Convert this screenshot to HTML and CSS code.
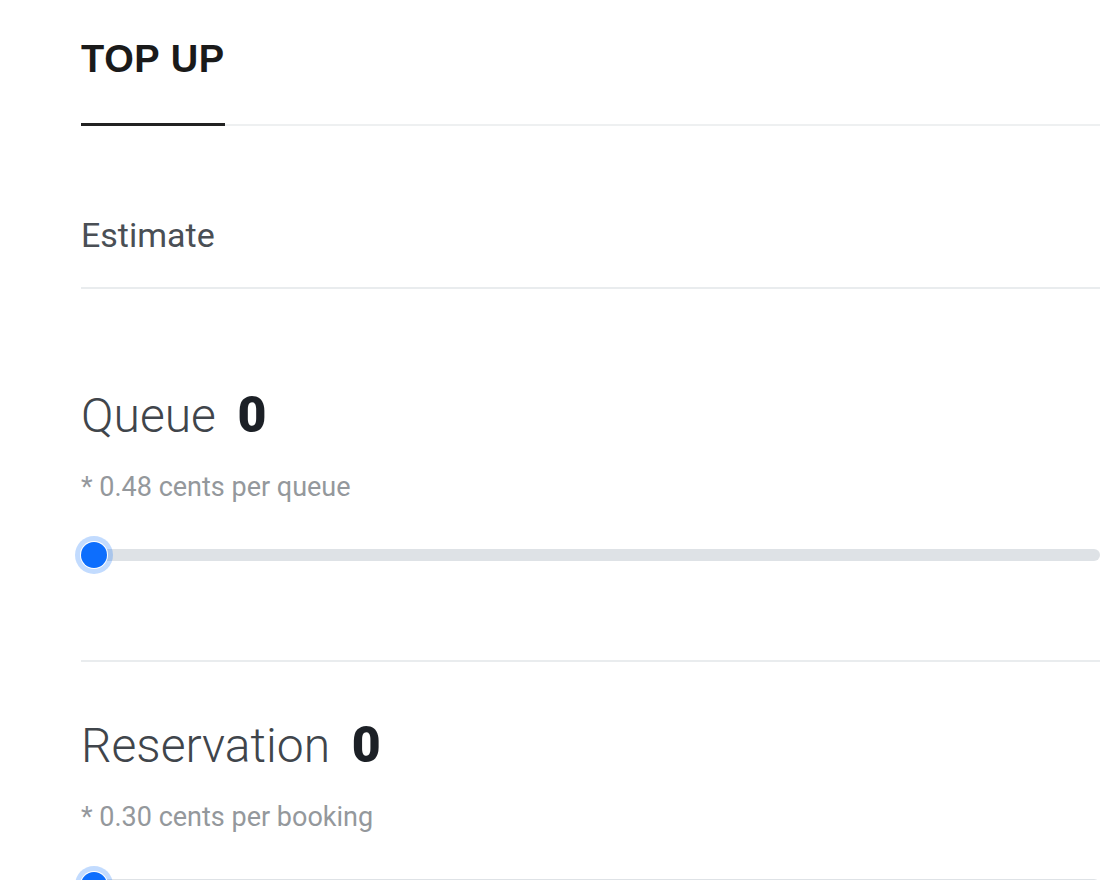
FILE: index.html
```html
<!DOCTYPE html>
<html lang="en">

<head>
    <meta charset="UTF-8">
    <meta name="viewport" content="width=device-width, initial-scale=1.0">
    <title>Top Up</title>
    <link rel="stylesheet" href="styles.css">
</head>

<body>
    <div class="page">
        <!-- Tabs -->
        <div class="tabs">
            <div class="tab active">TOP UP</div>
        </div>

        <div class="estimate">Estimate</div>

        <!-- Queue -->
        <div class="item first">
            <div class="item-title">Queue <span class="count">0</span></div>
            <div class="item-note">* 0.48 cents per queue</div>
            <div class="range">
                <div class="range-track"></div>
                <div class="range-thumb"></div>
            </div>
        </div>

        <!-- Reservation -->
        <div class="item">
            <div class="item-title">Reservation <span class="count">0</span></div>
            <div class="item-note">* 0.30 cents per booking</div>
            <div class="range">
                <div class="range-track"></div>
                <div class="range-thumb"></div>
            </div>
        </div>
    </div>
</body>

</html>
```

FILE: styles.css
```css
body {
    font-family: Roboto, "Liberation Sans", sans-serif;
    margin: 0;
    padding: 0;
    background-color: #ffffff;
    color: #212529;
    overflow: hidden;
}

.page {
    padding-left: 81px;
}

.tabs {
    display: flex;
    padding-top: 40px;
    border-bottom: 2px solid #eef0f1;
}

.tab {
    font-family: "Liberation Sans", Arial, sans-serif;
    font-weight: bold;
    font-size: 38px;
    line-height: 38px;
    letter-spacing: 0.6px;
    color: #1a1a1a;
    padding-bottom: 45px;
    margin-bottom: -2px;
    border-bottom: 3px solid transparent;
}

.tab.active {
    border-bottom-color: #222;
}

.estimate {
    margin-top: 92px;
    font-size: 34px;
    line-height: 34px;
    color: #4a4f55;
    padding-bottom: 35px;
    border-bottom: 2px solid #e9ecee;
}

.item {
    padding-top: 60px;
    padding-bottom: 92px;
    border-bottom: 2px solid #e9ecee;
}

.item.first {
    padding-top: 103px;
}

.item-title {
    font-size: 48px;
    line-height: 47px;
    font-weight: 300;
    color: #40454b;
}

.count {
    font-weight: 900;
    font-size: 50px;
    color: #1c2026;
    margin-left: 10px;
}

.item-note {
    margin-top: 35px;
    font-size: 27px;
    line-height: 27px;
    color: #94989c;
}

.range {
    position: relative;
    margin-top: 41px;
    height: 26px;
    display: flex;
    align-items: center;
}

.range-track {
    flex: 1;
    height: 12px;
    border-radius: 6px;
    background-color: #dee2e6;
}

.range-thumb {
    position: absolute;
    left: 0;
    top: 0;
    width: 26px;
    height: 26px;
    border-radius: 50%;
    background-color: #0d6efd;
    box-shadow: 0 0 0 1px #fff, 0 0 0 6px rgba(13, 110, 253, 0.25);
}
```
